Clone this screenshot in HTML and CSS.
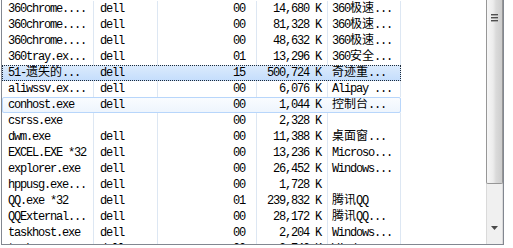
FILE: index.html
```html
<!DOCTYPE html>
<html lang="zh">
<head>
    <meta charset="UTF-8">
    <title>进程</title>
    <link rel="stylesheet" href="styles.css">
</head>
<body>
    <div class="frame">
        <div class="list">
            <div class="row"><span class="name">360chrome....</span><span class="user">dell</span><span class="cpu">00</span><span class="mem">14,680 K</span><span class="desc">360<span class="zh">极速</span>...</span></div>
            <div class="row"><span class="name">360chrome....</span><span class="user">dell</span><span class="cpu">00</span><span class="mem">81,328 K</span><span class="desc">360<span class="zh">极速</span>...</span></div>
            <div class="row"><span class="name">360chrome....</span><span class="user">dell</span><span class="cpu">00</span><span class="mem">48,632 K</span><span class="desc">360<span class="zh">极速</span>...</span></div>
            <div class="row"><span class="name">360tray.ex...</span><span class="user">dell</span><span class="cpu">01</span><span class="mem">13,296 K</span><span class="desc">360<span class="zh">安全</span>...</span></div>
            <div class="row selected"><span class="name">51-<span class="zh">遗失的</span>...</span><span class="user">dell</span><span class="cpu">15</span><span class="mem">500,724 K</span><span class="desc"><span class="zh">奇迹重</span>...</span></div>
            <div class="row"><span class="name">aliwssv.ex...</span><span class="user">dell</span><span class="cpu">00</span><span class="mem">6,076 K</span><span class="desc">Alipay ...</span></div>
            <div class="row hot"><span class="name">conhost.exe</span><span class="user">dell</span><span class="cpu">00</span><span class="mem">1,044 K</span><span class="desc"><span class="zh">控制台</span>...</span></div>
            <div class="row"><span class="name">csrss.exe</span><span class="user"></span><span class="cpu">00</span><span class="mem">2,328 K</span><span class="desc"></span></div>
            <div class="row"><span class="name">dwm.exe</span><span class="user">dell</span><span class="cpu">00</span><span class="mem">11,388 K</span><span class="desc"><span class="zh">桌面窗</span>...</span></div>
            <div class="row"><span class="name">EXCEL.EXE *32</span><span class="user">dell</span><span class="cpu">00</span><span class="mem">13,236 K</span><span class="desc">Microso...</span></div>
            <div class="row"><span class="name">explorer.exe</span><span class="user">dell</span><span class="cpu">00</span><span class="mem">26,452 K</span><span class="desc">Windows...</span></div>
            <div class="row"><span class="name">hppusg.exe...</span><span class="user">dell</span><span class="cpu">00</span><span class="mem">1,728 K</span><span class="desc"></span></div>
            <div class="row"><span class="name">QQ.exe *32</span><span class="user">dell</span><span class="cpu">01</span><span class="mem">239,832 K</span><span class="desc"><span class="zh">腾讯</span>QQ</span></div>
            <div class="row"><span class="name">QQExternal...</span><span class="user">dell</span><span class="cpu">00</span><span class="mem">28,172 K</span><span class="desc"><span class="zh">腾讯</span>QQ...</span></div>
            <div class="row"><span class="name">taskhost.exe</span><span class="user">dell</span><span class="cpu">00</span><span class="mem">2,204 K</span><span class="desc">Windows...</span></div>
            <div class="row"><span class="name">taskmgr.exe</span><span class="user">dell</span><span class="cpu">00</span><span class="mem">3,740 K</span><span class="desc">Windows...</span></div>
        </div>
        <div class="scrollbar">
            <div class="thumb"><span class="grip"></span></div>
            <svg class="arrow-down" width="7" height="4" viewBox="0 0 7 4"><path d="M0 0h7L3.5 4z" fill="#4a4a4a"/></svg>
        </div>
    </div>
</body>
</html>
```

FILE: styles.css
```css
* {
    margin: 0;
    padding: 0;
    box-sizing: border-box;
}

body {
    background: #fff;
    font-family: "Liberation Mono", "Noto Sans CJK SC", monospace;
    font-size: 12px;
    color: #000;
}

.frame {
    display: flex;
    width: 503px;
    height: 245px;
    margin-left: 1px;
    border: 1px solid #828790;
    border-top: none;
    overflow: hidden;
}

.list {
    flex: 1;
    padding-top: 1px;
    overflow: hidden;
}

.row {
    position: relative;
    display: grid;
    grid-template-columns: 92px 64px 99px 71px 73px;
    width: 399px;
    height: 16px;
    line-height: 16px;
    white-space: nowrap;
    letter-spacing: -1.2px;
}

.row > span {
    overflow: hidden;
    border-right: 1px solid #dde7f3;
}

.zh {
    letter-spacing: 0;
}

.name {
    padding-left: 6px;
}

.user {
    padding-left: 6px;
}

.cpu {
    text-align: right;
    padding-right: 11px;
}

.mem {
    text-align: right;
    padding-right: 6px;
}

.desc {
    padding-left: 4px;
}

/* selected + focus rect */
.row.selected {
    background: linear-gradient(#dcebfc, #c4ddfc);
}

.row.selected > span {
    border-right-color: transparent;
}

.row.selected::after {
    content: '';
    position: absolute;
    inset: 0;
    border: 1px dotted #1d2a3a;
}

/* hover row */
.row.hot {
    background: linear-gradient(#fafcff, #edf4fd);
}

.row.hot > span {
    border-right-color: transparent;
}

.row.hot::after {
    content: '';
    position: absolute;
    inset: 0;
    border: 1px solid #b8d6fb;
    border-radius: 2px;
}

.scrollbar {
    width: 17px;
    display: flex;
    flex-direction: column;
    align-items: center;
    background: #f0f0f0;
    box-shadow: inset 1px 0 #dadada, inset -1px 0 #dadada;
}

.thumb {
    width: 17px;
    height: 184px;
    display: flex;
    justify-content: center;
    padding-top: 14px;
    border: 1px solid #979797;
    border-top: none;
    border-radius: 0 0 2px 2px;
    background: linear-gradient(to right, #f6f6f6, #ececec 40%, #dadada 60%, #cdcdcd);
}

.grip {
    width: 7px;
    height: 8px;
    background: repeating-linear-gradient(#4f4f4f 0 1px, #a8a8a8 1px 2px, transparent 2px 3px);
}

.arrow-down {
    margin-top: auto;
    margin-bottom: 14px;
}
```
